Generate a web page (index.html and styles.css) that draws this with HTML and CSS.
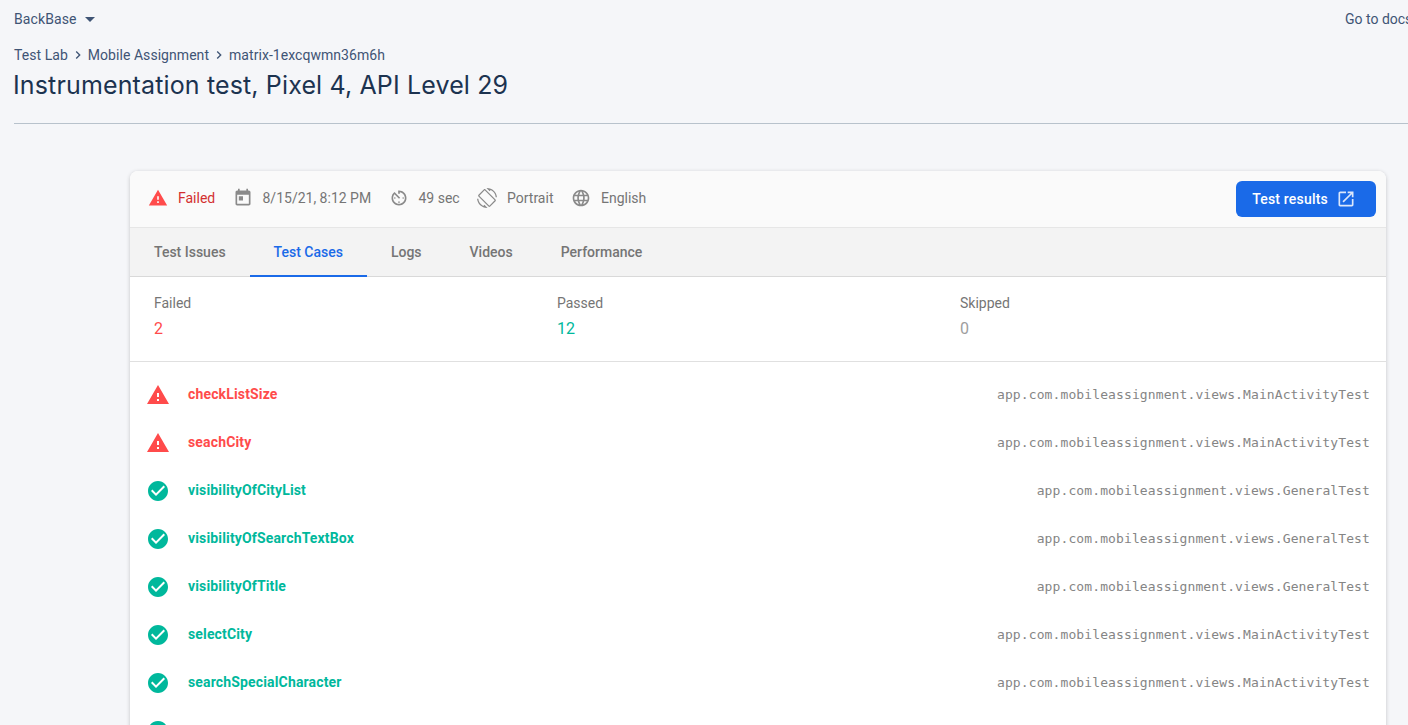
FILE: index.html
```html
<!DOCTYPE html>
<html lang="en">
<head>
    <meta charset="UTF-8">
    <meta name="viewport" content="width=device-width, initial-scale=1.0">
    <title>Instrumentation test, Pixel 4, API Level 29</title>
    <link rel="stylesheet" href="styles.css">
</head>
<body>
    <div class="topbar">
        <div class="project">BackBase
            <svg class="caret" viewBox="0 0 24 24"><path d="M7 10l5 5 5-5z"/></svg>
        </div>
        <a class="docs">Go to docs</a>
    </div>

    <div class="page-head">
        <div class="crumbs">
            <span>Test Lab</span>
            <svg class="chevron" viewBox="0 0 24 24"><path d="M10 6L8.59 7.41 13.17 12l-4.58 4.59L10 18l6-6z"/></svg>
            <span>Mobile Assignment</span>
            <svg class="chevron" viewBox="0 0 24 24"><path d="M10 6L8.59 7.41 13.17 12l-4.58 4.59L10 18l6-6z"/></svg>
            <span>matrix-1excqwmn36m6h</span>
        </div>
        <h1>Instrumentation test, Pixel 4, API Level 29</h1>
    </div>

    <div class="card">
        <div class="card-head">
            <div class="meta meta-failed">
                <svg class="meta-icon icon-red" viewBox="0 0 24 24"><path d="M1 21h22L12 2 1 21zm12-3h-2v-2h2v2zm0-4h-2v-4h2v4z"/></svg>
                <span>Failed</span>
            </div>
            <div class="meta meta-date">
                <svg class="meta-icon" viewBox="0 0 24 24"><path d="M19 3h-1V1h-2v2H8V1H6v2H5c-1.11 0-1.99.9-1.99 2L3 19c0 1.1.89 2 2 2h14c1.1 0 2-.9 2-2V5c0-1.1-.9-2-2-2zm0 16H5V8h14v11zM7 10h5v5H7z"/></svg>
                <span>8/15/21, 8:12 PM</span>
            </div>
            <div class="meta meta-time">
                <svg class="meta-icon" viewBox="0 0 24 24"><path d="M11 17c0 .55.45 1 1 1s1-.45 1-1-.45-1-1-1-1 .45-1 1zm0-14v4h2V5.08c3.39.49 6 3.39 6 6.92 0 3.87-3.13 7-7 7s-7-3.13-7-7c0-1.68.59-3.22 1.58-4.42L12 13l1.41-1.41-6.8-6.8v.02C4.42 6.45 3 9.05 3 12c0 4.97 4.02 9 9 9 4.97 0 9-4.03 9-9s-4.03-9-9-9h-1zm7 9c0-.55-.45-1-1-1s-1 .45-1 1 .45 1 1 1 1-.45 1-1zM6 12c0 .55.45 1 1 1s1-.45 1-1-.45-1-1-1-1 .45-1 1z"/></svg>
                <span>49 sec</span>
            </div>
            <div class="meta meta-orient">
                <svg class="meta-icon" viewBox="0 0 24 24"><path d="M16.48 2.52c3.27 1.55 5.61 4.72 5.97 8.48h1.5C23.44 4.84 18.29 0 12 0l-.66.03 3.81 3.81 1.33-1.32zm-6.25-.77c-.59-.59-1.54-.59-2.12 0L1.75 8.11c-.59.59-.59 1.54 0 2.12l12.02 12.02c.59.59 1.54.59 2.12 0l6.36-6.36c.59-.59.59-1.54 0-2.12L10.23 1.75zm4.6 19.44L2.81 9.17l6.36-6.36 12.02 12.02-6.36 6.36zm-7.31.29C4.25 19.94 1.91 16.76 1.55 13H.05C.56 19.16 5.71 24 12 24l.66-.03-3.81-3.81-1.33 1.32z"/></svg>
                <span>Portrait</span>
            </div>
            <div class="meta meta-lang">
                <svg class="meta-icon" viewBox="0 0 24 24"><path d="M11.99 2C6.47 2 2 6.48 2 12s4.47 10 9.99 10C17.52 22 22 17.52 22 12S17.52 2 11.99 2zm6.93 6h-2.95c-.32-1.25-.78-2.45-1.38-3.56 1.84.63 3.37 1.91 4.33 3.56zM12 4.04c.83 1.2 1.48 2.53 1.91 3.96h-3.82c.43-1.43 1.08-2.76 1.91-3.96zM4.26 14C4.1 13.36 4 12.69 4 12s.1-1.36.26-2h3.38c-.08.66-.14 1.32-.14 2 0 .68.06 1.34.14 2H4.26zm.82 2h2.95c.32 1.25.78 2.45 1.38 3.56-1.84-.63-3.37-1.9-4.33-3.56zm2.95-8H5.08c.96-1.66 2.49-2.93 4.33-3.56C8.81 5.55 8.35 6.75 8.03 8zM12 19.96c-.83-1.2-1.48-2.53-1.91-3.96h3.82c-.43 1.43-1.08 2.76-1.91 3.96zM14.34 14H9.66c-.09-.66-.16-1.32-.16-2 0-.68.07-1.35.16-2h4.68c.09.65.16 1.32.16 2 0 .68-.07 1.34-.16 2zm.25 5.56c.6-1.11 1.06-2.31 1.38-3.56h2.95c-.96 1.65-2.49 2.93-4.33 3.56zM16.36 14c.08-.66.14-1.32.14-2 0-.68-.06-1.34-.14-2h3.38c.16.64.26 1.31.26 2s-.1 1.36-.26 2h-3.38z"/></svg>
                <span>English</span>
            </div>
            <button class="results-btn">Test results
                <svg class="btn-icon" viewBox="0 0 24 24"><path d="M19 19H5V5h7V3H5c-1.11 0-2 .9-2 2v14c0 1.1.89 2 2 2h14c1.1 0 2-.9 2-2v-7h-2v7zM14 3v2h3.59l-9.83 9.83 1.41 1.41L19 6.41V10h2V3h-7z"/></svg>
            </button>
        </div>

        <div class="tabs">
            <div class="tab">Test Issues</div>
            <div class="tab active">Test Cases</div>
            <div class="tab">Logs</div>
            <div class="tab">Videos</div>
            <div class="tab">Performance</div>
        </div>

        <div class="summary">
            <div>
                <div class="summary-label">Failed</div>
                <div class="summary-value red">2</div>
            </div>
            <div>
                <div class="summary-label">Passed</div>
                <div class="summary-value green">12</div>
            </div>
            <div>
                <div class="summary-label">Skipped</div>
                <div class="summary-value grey">0</div>
            </div>
        </div>

        <div class="cases">
            <div class="case red">
                <svg class="case-icon" viewBox="0 0 24 24"><path d="M1 21h22L12 2 1 21zm12-3h-2v-2h2v2zm0-4h-2v-4h2v4z"/></svg>
                <span class="case-name">checkListSize</span>
                <span class="case-class">app.com.mobileassignment.views.MainActivityTest</span>
            </div>
            <div class="case red">
                <svg class="case-icon" viewBox="0 0 24 24"><path d="M1 21h22L12 2 1 21zm12-3h-2v-2h2v2zm0-4h-2v-4h2v4z"/></svg>
                <span class="case-name">seachCity</span>
                <span class="case-class">app.com.mobileassignment.views.MainActivityTest</span>
            </div>
            <div class="case green">
                <svg class="case-icon" viewBox="0 0 24 24"><path d="M12 2C6.48 2 2 6.48 2 12s4.48 10 10 10 10-4.48 10-10S17.52 2 12 2zm-2 15l-5-5 1.41-1.41L10 14.17l7.59-7.59L19 8l-9 9z"/></svg>
                <span class="case-name">visibilityOfCityList</span>
                <span class="case-class">app.com.mobileassignment.views.GeneralTest</span>
            </div>
            <div class="case green">
                <svg class="case-icon" viewBox="0 0 24 24"><path d="M12 2C6.48 2 2 6.48 2 12s4.48 10 10 10 10-4.48 10-10S17.52 2 12 2zm-2 15l-5-5 1.41-1.41L10 14.17l7.59-7.59L19 8l-9 9z"/></svg>
                <span class="case-name">visibilityOfSearchTextBox</span>
                <span class="case-class">app.com.mobileassignment.views.GeneralTest</span>
            </div>
            <div class="case green">
                <svg class="case-icon" viewBox="0 0 24 24"><path d="M12 2C6.48 2 2 6.48 2 12s4.48 10 10 10 10-4.48 10-10S17.52 2 12 2zm-2 15l-5-5 1.41-1.41L10 14.17l7.59-7.59L19 8l-9 9z"/></svg>
                <span class="case-name">visibilityOfTitle</span>
                <span class="case-class">app.com.mobileassignment.views.GeneralTest</span>
            </div>
            <div class="case green">
                <svg class="case-icon" viewBox="0 0 24 24"><path d="M12 2C6.48 2 2 6.48 2 12s4.48 10 10 10 10-4.48 10-10S17.52 2 12 2zm-2 15l-5-5 1.41-1.41L10 14.17l7.59-7.59L19 8l-9 9z"/></svg>
                <span class="case-name">selectCity</span>
                <span class="case-class">app.com.mobileassignment.views.MainActivityTest</span>
            </div>
            <div class="case green">
                <svg class="case-icon" viewBox="0 0 24 24"><path d="M12 2C6.48 2 2 6.48 2 12s4.48 10 10 10 10-4.48 10-10S17.52 2 12 2zm-2 15l-5-5 1.41-1.41L10 14.17l7.59-7.59L19 8l-9 9z"/></svg>
                <span class="case-name">searchSpecialCharacter</span>
                <span class="case-class">app.com.mobileassignment.views.MainActivityTest</span>
            </div>
            <div class="case green">
                <svg class="case-icon" viewBox="0 0 24 24"><path d="M12 2C6.48 2 2 6.48 2 12s4.48 10 10 10 10-4.48 10-10S17.52 2 12 2zm-2 15l-5-5 1.41-1.41L10 14.17l7.59-7.59L19 8l-9 9z"/></svg>
            </div>
        </div>
    </div>
</body>
</html>
```

FILE: styles.css
```css
html, body {
    height: 725px;
    overflow: hidden;
}
body {
    margin: 0;
    font-family: Roboto, Arial, sans-serif;
    font-size: 14px;
    background-color: #f5f6f9;
    color: #3c4f6b;
}
.topbar {
    display: flex;
    justify-content: space-between;
    align-items: center;
    height: 20px;
    padding: 9px 0 0 14px;
    white-space: nowrap;
}
.project {
    display: flex;
    align-items: center;
    letter-spacing: .1px;
    color: #3f5475;
}
.caret {
    width: 24px;
    height: 24px;
    margin-left: 1px;
    fill: #3f5475;
}
.docs {
    width: 63px;
    overflow: hidden;
    color: #3f5475;
}
.page-head {
    margin-left: 14px;
    height: 78px;
    padding-top: 16px;
    border-bottom: 1px solid #b8c2cc;
}
.crumbs {
    display: flex;
    align-items: center;
    height: 20px;
    color: #3f5475;
    letter-spacing: .05px;
}
.chevron {
    width: 16px;
    height: 16px;
    margin: 0 2px;
    fill: #3f5475;
}
h1 {
    margin: 4px 0 0 -1px;
    font-family: Inter, Roboto, sans-serif;
    font-size: 25px;
    font-weight: 400;
    letter-spacing: .14px;
    line-height: 32px;
    color: #1c3350;
    white-space: nowrap;
}
.card {
    margin: 47px 22px 0 130px;
    background: #fff;
    border-radius: 8px;
    box-shadow: 0 1px 4px rgba(0, 0, 0, 0.2);
}
.card-head {
    display: flex;
    align-items: center;
    height: 56px;
    padding: 0 10px 0 18px;
    background: #fafafa;
    border-radius: 8px 8px 0 0;
    border-bottom: 1px solid #e6e6e6;
    color: #757575;
}
.meta {
    display: flex;
    align-items: center;
    gap: 10px;
    margin-bottom: 2px;
}
.meta-failed {
    color: #d32f2f;
    width: 84.5px;
}
.meta-date {
    width: 156px;
}
.meta-time {
    width: 88.5px;
}
.meta-orient {
    width: 94px;
}
.meta-icon {
    width: 20px;
    height: 20px;
    fill: #8a8a8a;
    flex-shrink: 0;
}
.icon-red {
    fill: #ff4b4b;
}
.results-btn {
    display: flex;
    align-items: center;
    gap: 8px;
    margin-left: auto;
    height: 36px;
    padding: 0 20px 0 16px;
    border: none;
    border-radius: 6px;
    background-color: #1a6ae8;
    color: #fff;
    font-family: inherit;
    font-size: 14px;
    font-weight: 500;
    letter-spacing: .2px;
}
.btn-icon {
    width: 20px;
    height: 20px;
    fill: #dbe7fb;
}
.tabs {
    display: flex;
    height: 48px;
    background: #f3f3f3;
    border-bottom: 1px solid #d9d9d9;
}
.tab {
    padding: 0 24px;
    line-height: 48px;
    font-weight: 500;
    color: #757575;
}
.tab.active {
    color: #1a6ae8;
    border-bottom: 2px solid #1a6ae8;
    height: 47px;
}
.summary {
    display: grid;
    grid-template-columns: repeat(3, 403px);
    height: 84px;
    padding: 0 24px;
    border-bottom: 1px solid #e0e0e0;
}
.summary-label {
    margin-top: 17px;
    line-height: 18px;
    color: #757575;
}
.summary-value {
    margin-top: 5px;
    font-size: 16px;
    line-height: 24px;
}
.red {
    color: #ff4b4b;
}
.green {
    color: #00b89c;
}
.grey {
    color: #9e9e9e;
}
.cases {
    padding-top: 8px;
}
.case {
    display: flex;
    align-items: center;
    height: 48px;
    padding: 0 16px;
    fill: currentColor;
}
.case-icon {
    width: 24px;
    height: 24px;
    margin-top: 2px;
    flex-shrink: 0;
}
.case-name {
    margin-left: 18px;
    font-weight: 700;
    letter-spacing: .15px;
}
.case-class {
    margin-left: auto;
    font-family: "DejaVu Sans Mono", monospace;
    font-size: 13px;
    letter-spacing: .11px;
    color: #858585;
}
```
